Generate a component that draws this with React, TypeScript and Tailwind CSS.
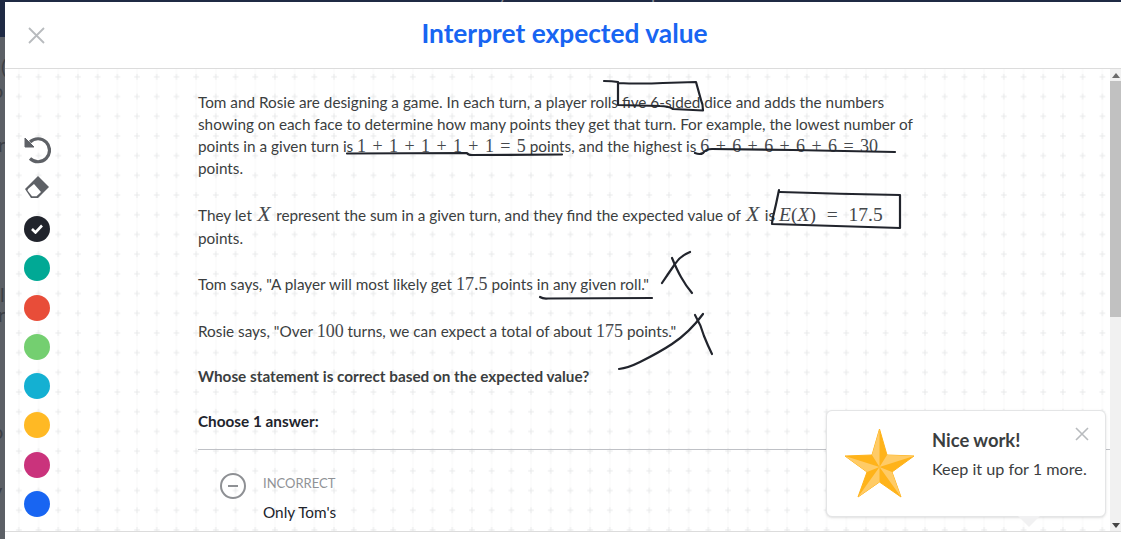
function Ink() {
  const paths = [
    'M604 81 Q612 81 618 82 L618 105 L660 106 Q668 106 673 109 L703 110.5 Q703 104 701 100 L696 82 L663 83 Q640 84 618 83',
    'M347 153.5 L467 153 Q468 155 472 155 L562 154.5',
    'M695 153 Q700 155 703 153 Q706 149 712 149 L793 150 L895 152',
    'M779 190 Q776 205 773 217 Q772 222 772 224 L900 228 L900 195 Q840 194 780 192',
    'M540 297 Q543 299 548 298.5 L652 298',
    'M690 252 Q680 256 675 264 Q668 274 662 283',
    'M672 258 Q677 270 681 277 Q686 286 692 293',
    'M619 369 Q628 368 640 362 Q660 352 672 344 Q690 332 703 314',
    'M695 315 Q701 325 704 336 Q708 346 712 354',
  ];
  return (
    <svg className="absolute left-0 top-0 pointer-events-none" width="1121" height="539" fill="none" stroke="#21242c" strokeWidth="2.2" strokeLinecap="round" strokeLinejoin="round">
      {paths.map((d) => <path key={d} d={d} />)}
    </svg>
  );
}
function GridMarks() {
  return (
    <svg className="absolute left-0 top-0 pointer-events-none" width="100%" height="100%">
      <defs>
        <pattern id="g" x="4" y="-2" width="19.7" height="19.7" patternUnits="userSpaceOnUse">
          <path d="M9.85 0V19.7" stroke="#f6f6f7" strokeWidth="0.7" />
          <path d="M9.85 7V12.7M7 9.85H12.7" stroke="#e8e9ea" strokeWidth="1" />
        </pattern>
      </defs>
      <rect width="100%" height="100%" fill="url(#g)" />
    </svg>
  );
}
function Star() {
  return (
    <svg width="70" height="70" viewBox="0 0 70 70" className="mt-[1px] shrink-0">
      <path d="M34.5 0 L42 26 L69 27 L47 43 L56 68 L34.5 53 L13 68 L22 43 L0 27 L27 26Z" fill="#ffb31a" stroke="#ffb31a" strokeLinejoin="round" />
      <path d="M34.5 0 L27 26 L34.5 38Z M69 27 L42 26 L34.5 38Z M56 68 L47 43 L34.5 38Z M13 68 L34.5 53 L34.5 38Z M0 27 L22 43 L34.5 38Z" fill="#ffcb66" />
    </svg>
  );
}
function Bit({ children, className }: { children: string; className: string }) {
  return <span className={"absolute leading-none text-[20px] text-[#3c3f45] " + className}>{children}</span>;
}
export default function App() {
  const math = "font-['Liberation_Serif',serif] text-[18px] leading-none [word-spacing:1.9px] text-[#45484c]";
  const bigMath = "font-['Liberation_Serif',serif] text-[19.5px] leading-none [word-spacing:6px] text-[#45484c]";
  const bigX = "font-['Liberation_Serif',serif] text-[22px] leading-none px-[1.5px] text-[#45484c]";
  return (
    <div className="relative h-[539px] w-[1121px] overflow-hidden bg-[#5c6066] font-['Lato',sans-serif] text-[15.3px] leading-[22px] text-[#3b3e40]">
      <div className="h-[2px] overflow-hidden bg-[#1f2a44]">
        <div className="-mt-[16px] pl-[380px] text-[18px] leading-[18px] text-[#8a8d94]">Unit: Probability distributions &amp; expected value</div>
      </div>
      <div className="absolute left-0 top-0 h-[539px] w-[5px] overflow-hidden">
        <div className="h-[37px] bg-[#1f2a44]" />
        <Bit className="left-[1px] top-[56px]">(</Bit>
        <Bit className="-left-[8px] top-[80px]">o</Bit>
        <Bit className="-left-[2px] top-[134px]">r</Bit>
        <Bit className="left-0 top-[284px]">l</Bit>
        <Bit className="-left-[2px] top-[304px]">r</Bit>
        <Bit className="-left-[8px] top-[421px]">o</Bit>
        <Bit className="-left-[8px] top-[480px]">v</Bit>
      </div>
      <div className="ml-[5px] flex h-[537px] flex-col bg-white">
        <header className="relative flex h-[67px] shrink-0 items-center justify-center border-b border-[#dcdcdc] pb-[5px] pl-[3px]">
          <svg className="absolute left-[23px] top-[25px]" width="17" height="17" viewBox="0 0 17 17" stroke="#b8bbbe" strokeWidth="1.8" fill="none"><path d="M1 1L16 16M16 1L1 16" /></svg>
          <h1 className="text-[26.3px] leading-8 font-bold text-[#1865f2]">Interpret expected value</h1>
        </header>
        <div className="relative flex min-h-0 flex-1">
          <main className="relative min-w-0 flex-1 overflow-hidden pl-[193px]">
            <GridMarks />
            <div className="relative w-[720px] pt-[22px]">
              <p>Tom and Rosie are designing a game. In each turn, a player rolls five 6-sided dice and adds the numbers showing on each face to determine how many points they get that turn. For example, the lowest number of points in a given turn is <span className={math}>1 + 1 + 1 + 1 + 1 = 5</span> points, and the highest is <span className={math}>6 + 6 + 6 + 6 + 6 = 30</span> points.</p>
              <p className="mt-[24px] leading-[23px]">They let <i className={bigX}>X</i> represent the sum in a given turn, and they find the expected value of <i className={bigX}>X</i> is <span className={bigMath}><i>E</i>(<i>X</i>) = 17.5</span> points.</p>
              <p className="mt-[23px]">Tom says, "A player will most likely get <span className={math}>17.5</span> points in any given roll."</p>
              <p className="mt-[25px]">Rosie says, "Over <span className={math}>100</span> turns, we can expect a total of about <span className={math}>175</span> points."</p>
              <p className="mt-[23px] font-bold">Whose statement is correct based on the expected value?</p>
              <p className="mt-[23px] font-bold text-[#21242c]">Choose 1 answer:</p>
            </div>
            <div className="relative mt-[17px] border-t border-[#bfc1c6]" />
            <div className="relative mt-[22px] flex gap-[17px] pl-[22px]">
              <svg className="mt-[1px] shrink-0" width="26" height="26" viewBox="0 0 26 26" fill="none" stroke="#8e9094" strokeWidth="2"><circle cx="13" cy="13" r="12" /><path d="M8 13H18" /></svg>
              <div>
                <div className="text-[13px] leading-[22px] text-[#909296]">INCORRECT</div>
                <div className="mt-[7px] text-[#21242c]">Only Tom's</div>
              </div>
            </div>
          </main>
          <div className="flex w-[11px] shrink-0 flex-col items-center bg-[#f1f1f1]">
            <div className="mt-[4px] h-0 w-0 border-x-[4px] border-b-[5px] border-x-transparent border-b-[#6b6b6b]" />
            <div className="mt-[3px] h-[236px] w-full bg-[#c1c1c1]" />
            <div className="mt-auto mb-[3px] h-0 w-0 border-x-[4px] border-t-[5px] border-x-transparent border-t-[#444]" />
          </div>
          <aside className="absolute bottom-[14px] left-[18px] flex flex-col items-center gap-[13.3px]">
            <svg className="mb-[-3px]" width="28" height="28" viewBox="0 0 28 28" fill="none" stroke="#5e6166" strokeWidth="3.2"><path d="M7 6A11.5 11.5 0 1 1 7 22.5" /><path d="M2 2L11 11L2 11Z" fill="#5e6166" strokeWidth="1" /></svg>
            <svg className="mb-[4px]" width="26" height="24" viewBox="0 0 26 24"><path d="M14 1L25 12L14 23H7L1 14Z" fill="#5e6166" /><path d="M4 14L10 9L17 17L12.5 21.3H8L3.5 15.5Z" fill="#fff" /></svg>
            <span className="flex h-[26px] w-[26px] items-center justify-center rounded-full bg-[#21242c]">
              <svg width="12" height="10" viewBox="0 0 12 10" fill="none" stroke="#fff" strokeWidth="2.6"><path d="M1 5L4.5 8.5L11 1.5" /></svg>
            </span>
            <span className="h-[26px] w-[26px] rounded-full bg-[#01a995]" />
            <span className="h-[26px] w-[26px] rounded-full bg-[#e84d39]" />
            <span className="h-[26px] w-[26px] rounded-full bg-[#74cf70]" />
            <span className="h-[26px] w-[26px] rounded-full bg-[#14b0d2]" />
            <span className="h-[26px] w-[26px] rounded-full bg-[#ffb924]" />
            <span className="h-[26px] w-[26px] rounded-full bg-[#ca337c]" />
            <span className="h-[26px] w-[26px] rounded-full bg-[#1865f2]" />
          </aside>
          <div className="absolute right-[15px] bottom-[14px] flex h-[107px] w-[280px] gap-[17px] rounded-md border border-[#e4e5e6] bg-white pl-[18px] pt-[17px] shadow-sm">
            <Star />
            <div>
              <div className="text-[18.4px] leading-[24px] font-bold">Nice work!</div>
              <div className="mt-[6px] text-[16.2px]">Keep it up for 1 more.</div>
            </div>
            <svg className="absolute right-[16px] top-[16px]" width="14" height="14" viewBox="0 0 14 14" stroke="#b8bbbe" strokeWidth="1.6"><path d="M1 1L13 13M13 1L1 13" /></svg>
            <div className="absolute -bottom-[11px] left-[191px] h-0 w-0 border-x-[11px] border-t-[11px] border-x-transparent border-t-[#f1f1f2]" />
          </div>
        </div>
        <footer className="h-[8px] shrink-0 border-t border-[#dcdcdc] bg-white" />
      </div>
      <Ink />
    </div>
  );
}
